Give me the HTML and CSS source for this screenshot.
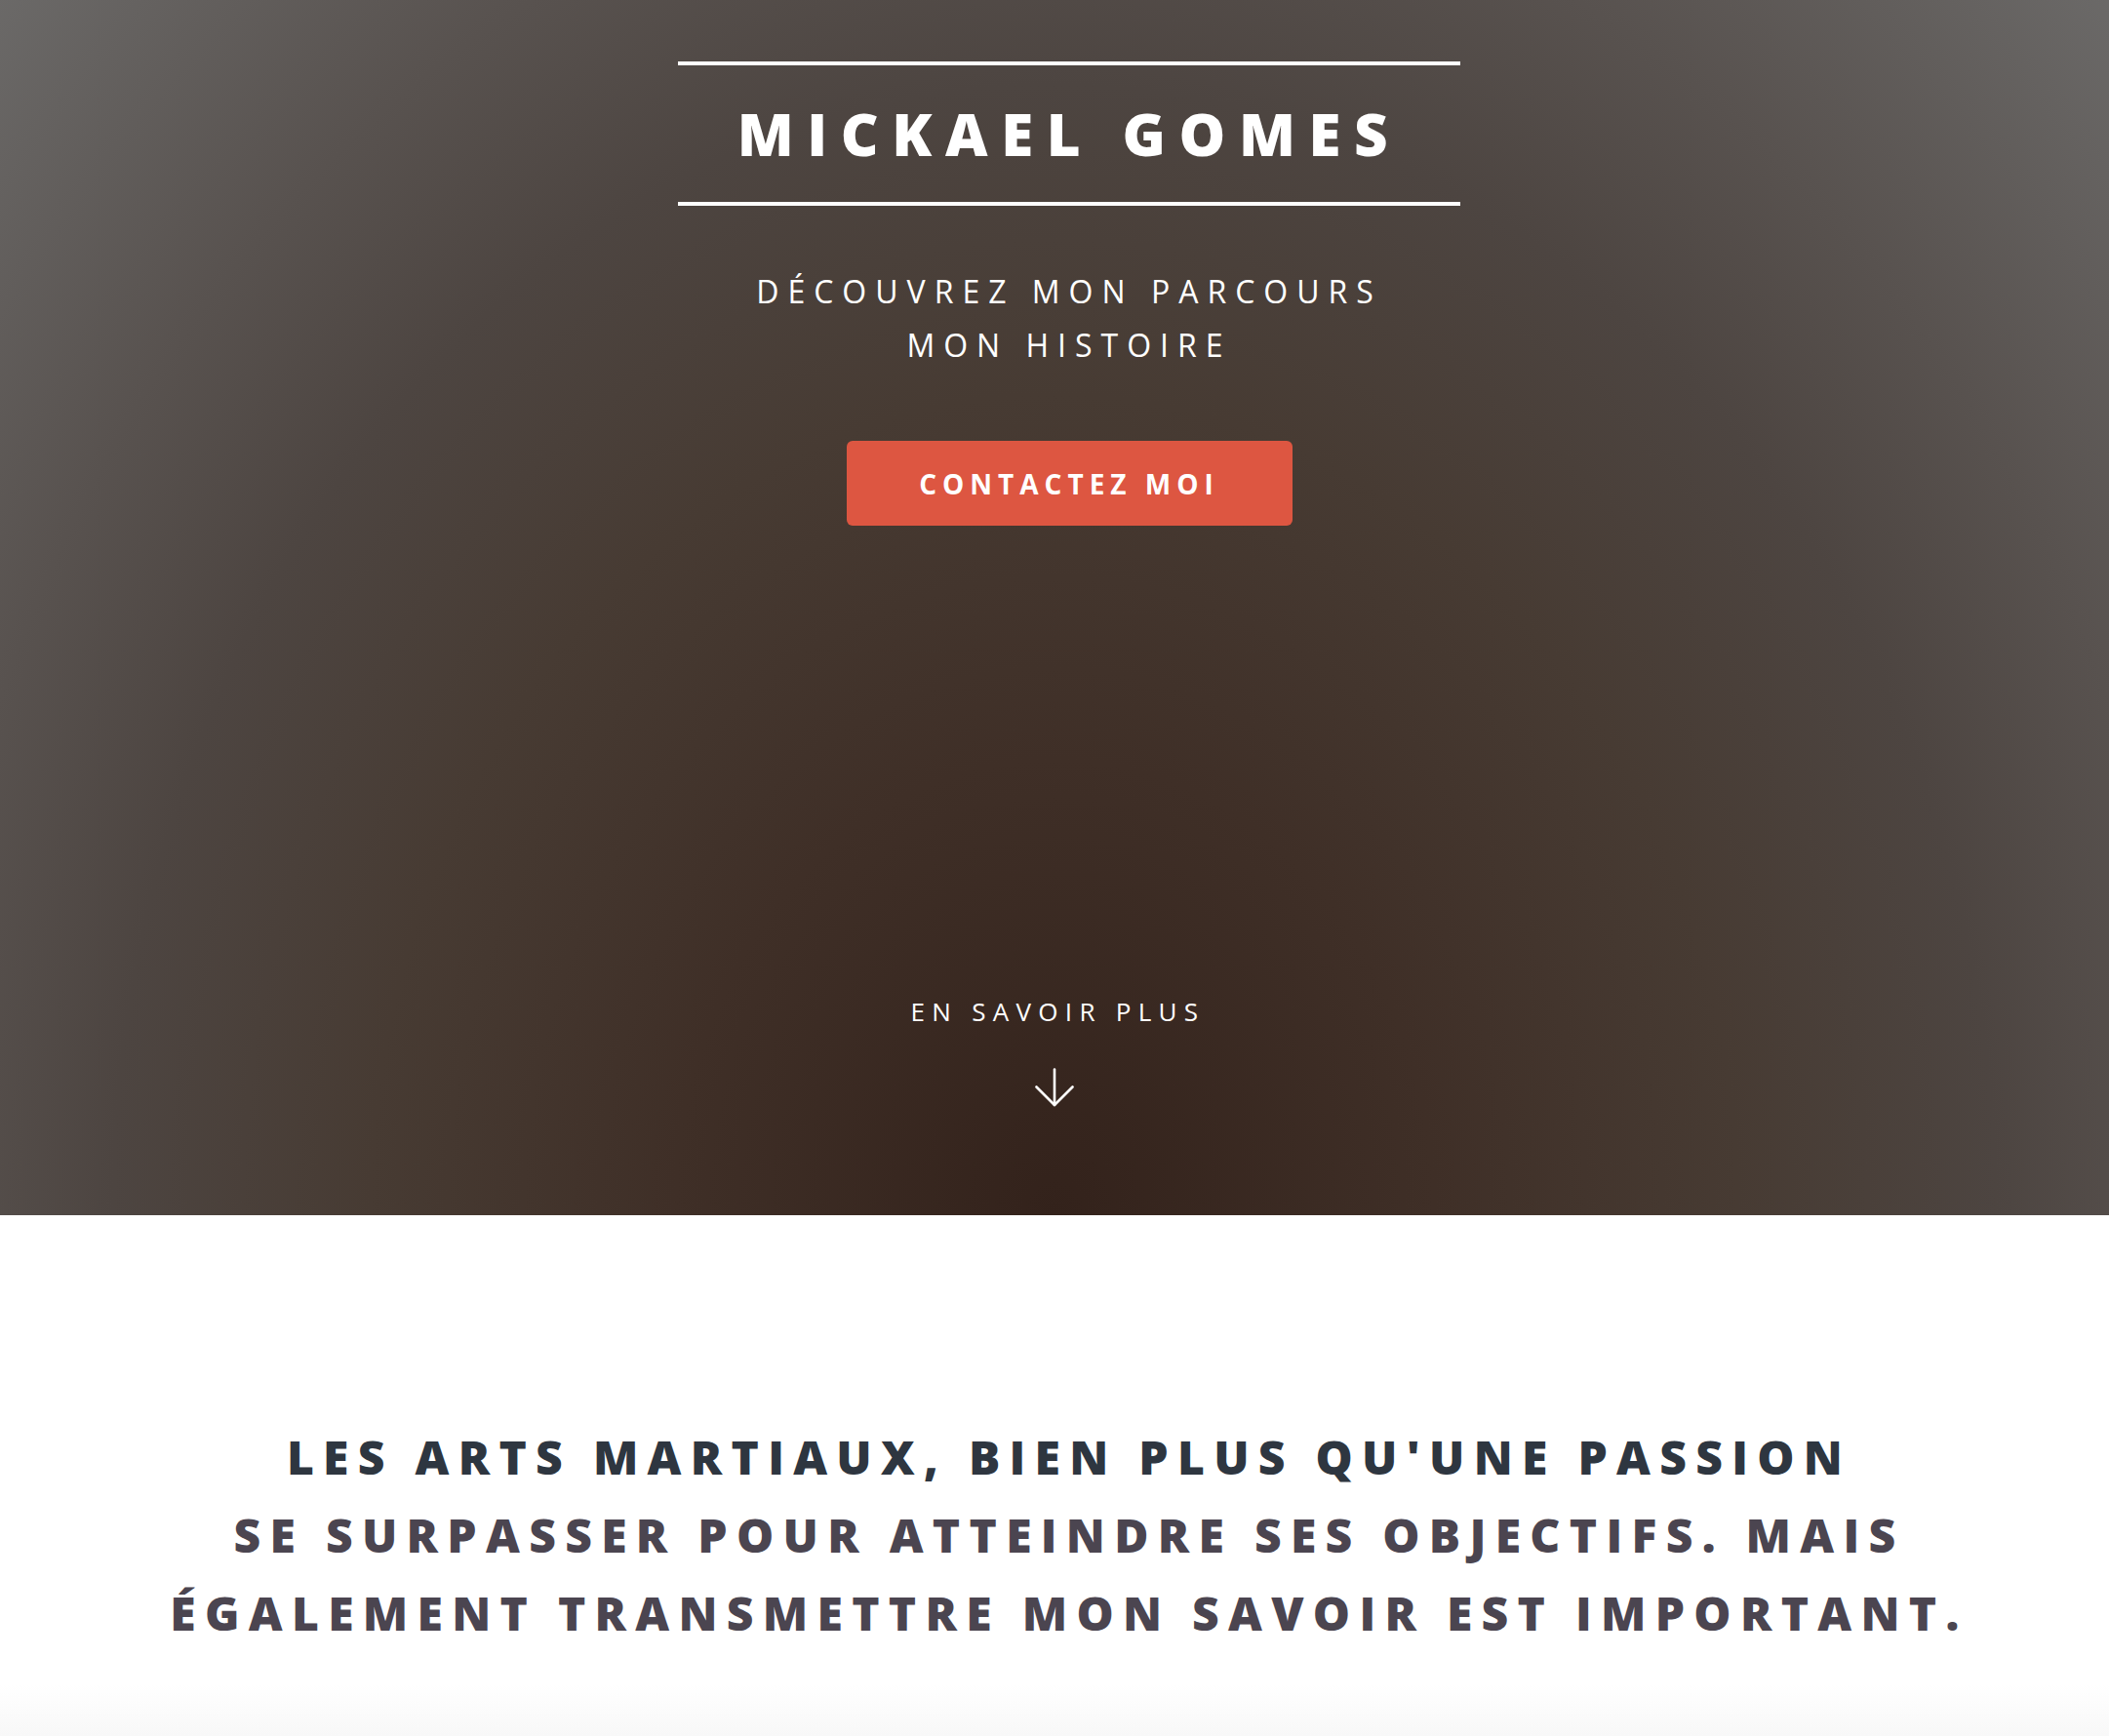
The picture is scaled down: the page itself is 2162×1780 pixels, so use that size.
FILE: index.html
```html
<!DOCTYPE html>
<html lang="fr">
<head>
<meta charset="utf-8">
<title>Mickael Gomes</title>
<link rel="stylesheet" href="styles.css">
</head>
<body>
<header class="hero">
  <div class="hero-inner">
    <h1 class="brand">MICKAEL GOMES</h1>
    <p class="intro">DÉCOUVREZ MON PARCOURS<br>MON HISTOIRE</p>
    <a class="btn-contact" href="#contact">CONTACTEZ MOI</a>
  </div>
  <a class="more" href="#about">
    <span class="more-label">EN SAVOIR PLUS</span>
    <svg class="more-arrow" width="40" height="40" viewBox="0 0 40 40" fill="none" stroke="#fff" stroke-width="2.6" stroke-linecap="round" stroke-linejoin="round">
      <path d="M20 1.5 V38"/>
      <path d="M1.5 19.5 L20 38 L38.5 19.5"/>
    </svg>
  </a>
</header>
<section class="about" id="about">
  <h2 class="about-text"><span class="about-lead">LES ARTS MARTIAUX, BIEN PLUS QU'UNE PASSION</span><br><span class="about-rest">SE SURPASSER POUR ATTEINDRE SES OBJECTIFS. MAIS<br>ÉGALEMENT TRANSMETTRE MON SAVOIR EST IMPORTANT.</span></h2>
</section>
<section class="next"></section>
</body>
</html>
```

FILE: styles.css
```css
html, body {
  margin: 0;
  padding: 0;
}

body {
  background: #ffffff;
  font-family: "Open Sans", "Noto Sans", "Liberation Sans", sans-serif;
  color: #ffffff;
}

.hero {
  height: 1246px;
  display: flex;
  flex-direction: column;
  align-items: center;
  overflow: hidden;
  background:
    radial-gradient(ellipse 72% 150% at 50% 100%,
      #33221b 0%,
      #3f2f27 25%,
      #473b33 45%,
      #4d4541 62%,
      #58524f 75%,
      #6e6d6c 100%);
}

.hero-inner {
  width: 100%;
  box-sizing: border-box;
  padding: 63px 0 0 30px;
  display: flex;
  flex-direction: column;
  align-items: center;
}

.brand {
  width: 802px;
  box-sizing: border-box;
  margin: 0;
  padding: 34px 0;
  border-top: 4px solid #ffffff;
  border-bottom: 4px solid #ffffff;
  font-size: 60px;
  line-height: 72px;
  font-weight: 800;
  letter-spacing: 13.6px;
  text-align: center;
  color: #ffffff;
}

.intro {
  margin: 60px 0 0;
  font-size: 32px;
  line-height: 55px;
  font-weight: 400;
  letter-spacing: 9px;
  text-align: center;
  color: #ffffff;
}

.btn-contact {
  margin-top: 71px;
  width: 457px;
  height: 87px;
  display: flex;
  align-items: center;
  justify-content: center;
  background: #dd5641;
  border-radius: 6px;
  color: #ffffff;
  text-decoration: none;
  font-size: 28px;
  font-weight: 700;
  letter-spacing: 6px;
}

.more {
  margin-top: 480px;
  display: flex;
  flex-direction: column;
  align-items: center;
  color: #ffffff;
  text-decoration: none;
}

.more-label {
  font-size: 26px;
  line-height: 36px;
  font-weight: 400;
  letter-spacing: 7.3px;
  padding-left: 7px;
}

.more-arrow {
  display: block;
  margin-top: 40px;
}

.about {
  padding: 208px 0 33px 30px;
  background: #ffffff;
}

.about-text {
  margin: 0;
  font-size: 48px;
  line-height: 80px;
  font-weight: 800;
  letter-spacing: 9.3px;
  text-align: center;
  white-space: nowrap;
}

.about-lead {
  color: #2e3640;
}

.about-rest {
  color: #4b4550;
}

.next {
  height: 60px;
  background: linear-gradient(#ffffff, #f7f7f7);
}
```
